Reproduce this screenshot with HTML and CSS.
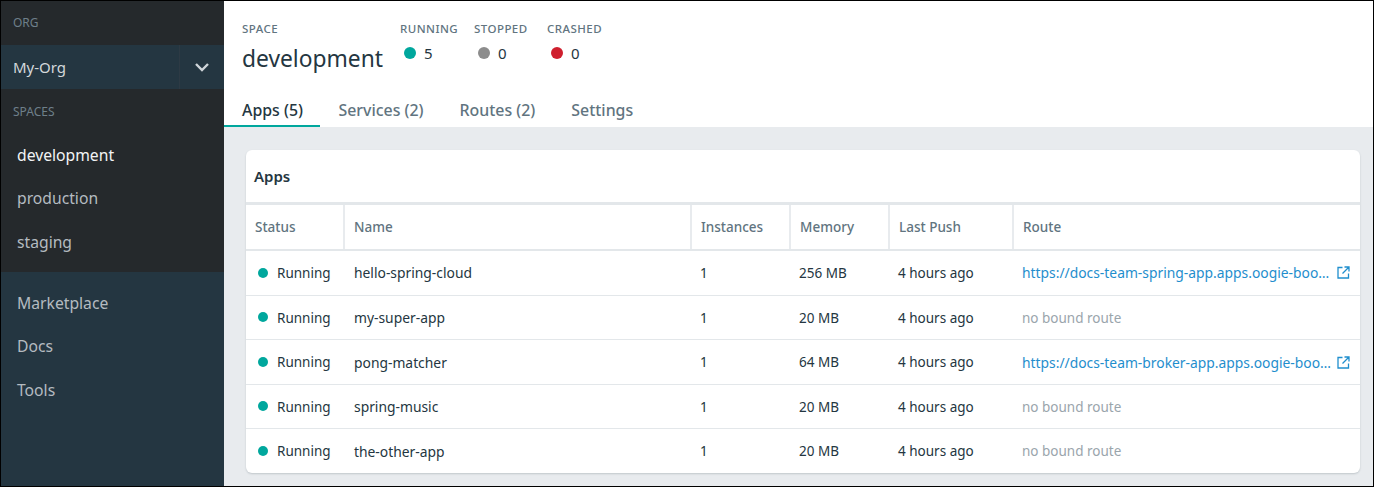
FILE: index.html
```html
<!DOCTYPE html>
<html lang="en">

<head>
    <meta charset="UTF-8">
    <title>development - Apps</title>
    <link rel="stylesheet" href="styles.css">
</head>

<body>
    <div class="app">
        <!-- Sidebar -->
        <nav class="sidebar">
            <div class="sideLabel orgLabel">ORG</div>
            <div class="orgPicker">
                <span class="orgName">My-Org</span>
                <span class="orgToggle">
                    <svg width="16" height="10" viewBox="0 0 16 10">
                        <path d="M2 2l6 6 6-6" fill="none" stroke="#cfd5d9" stroke-width="2.4" />
                    </svg>
                </span>
            </div>
            <div class="spaces">
                <div class="sideLabel">SPACES</div>
                <a class="sideLink active">development</a>
                <a class="sideLink">production</a>
                <a class="sideLink">staging</a>
            </div>
            <div class="sideLinks">
                <a class="sideLink">Marketplace</a>
                <a class="sideLink">Docs</a>
                <a class="sideLink">Tools</a>
            </div>
        </nav>

        <main class="main">
            <!-- Header -->
            <header class="header">
                <div class="summary">
                    <div class="spaceBlock">
                        <div class="miniLabel">SPACE</div>
                        <h1>development</h1>
                    </div>
                    <div class="count running">
                        <div class="miniLabel">RUNNING</div>
                        <div class="countValue"><span class="dot teal"></span>5</div>
                    </div>
                    <div class="count stopped">
                        <div class="miniLabel">STOPPED</div>
                        <div class="countValue"><span class="dot gray"></span>0</div>
                    </div>
                    <div class="count crashed">
                        <div class="miniLabel">CRASHED</div>
                        <div class="countValue"><span class="dot red"></span>0</div>
                    </div>
                </div>
                <div class="tabs">
                    <a class="tab active">Apps (5)</a>
                    <a class="tab">Services (2)</a>
                    <a class="tab">Routes (2)</a>
                    <a class="tab">Settings</a>
                </div>
            </header>

            <!-- Apps table -->
            <section class="content">
                <div class="card">
                    <h2>Apps</h2>
                    <table>
                        <thead>
                            <tr>
                                <th class="colStatus">Status</th>
                                <th class="colName">Name</th>
                                <th class="colInstances">Instances</th>
                                <th class="colMemory">Memory</th>
                                <th class="colPush">Last Push</th>
                                <th>Route</th>
                            </tr>
                        </thead>
                        <tbody>
                            <tr class="rowTall">
                                <td><span class="dot small teal"></span>Running</td>
                                <td class="appName">hello-spring-cloud</td>
                                <td>1</td>
                                <td>256 MB</td>
                                <td>4 hours ago</td>
                                <td class="routeCell">
                                    <a class="route">
                                        <span class="routeText">https://docs-team-spring-app.apps.oogie-boo…</span>
                                        <svg class="extIcon" width="13" height="13" viewBox="0 0 13 13">
                                            <path d="M5.5 1.5H1v10.500h10.500V7.500M7.500 1H12v4.500M12 1L5.500 7.500" fill="none" stroke="#1f8ecd" stroke-width="1.300" />
                                        </svg>
                                    </a>
                                </td>
                            </tr>
                            <tr class="rowB">
                                <td><span class="dot small teal"></span>Running</td>
                                <td class="appName">my-super-app</td>
                                <td>1</td>
                                <td>20 MB</td>
                                <td>4 hours ago</td>
                                <td class="noRoute">no bound route</td>
                            </tr>
                            <tr class="rowA">
                                <td><span class="dot small teal"></span>Running</td>
                                <td class="appName">pong-matcher</td>
                                <td>1</td>
                                <td>64 MB</td>
                                <td>4 hours ago</td>
                                <td class="routeCell">
                                    <a class="route">
                                        <span class="routeText">https://docs-team-broker-app.apps.oogie-boo…</span>
                                        <svg class="extIcon" width="13" height="13" viewBox="0 0 13 13">
                                            <path d="M5.5 1.5H1v10.500h10.500V7.500M7.500 1H12v4.500M12 1L5.500 7.500" fill="none" stroke="#1f8ecd" stroke-width="1.300" />
                                        </svg>
                                    </a>
                                </td>
                            </tr>
                            <tr class="rowB">
                                <td><span class="dot small teal"></span>Running</td>
                                <td class="appName">spring-music</td>
                                <td>1</td>
                                <td>20 MB</td>
                                <td>4 hours ago</td>
                                <td class="noRoute">no bound route</td>
                            </tr>
                            <tr class="rowA">
                                <td><span class="dot small teal"></span>Running</td>
                                <td class="appName">the-other-app</td>
                                <td>1</td>
                                <td>20 MB</td>
                                <td>4 hours ago</td>
                                <td class="noRoute">no bound route</td>
                            </tr>
                        </tbody>
                    </table>
                </div>
            </section>
        </main>
    </div>
</body>

</html>
```

FILE: styles.css
```css
* {
    box-sizing: border-box;
}

html,
body {
    margin: 0;
    height: 487px;
    overflow: hidden;
}

body {
    font-family: "Noto Sans", Lato, sans-serif;
    font-size: 13.5px;
    color: #243641;
    background: #000;
    padding: 1px;
}

.app {
    display: flex;
    height: 485px;
    background: #e8ebee;
}

/* sidebar */
.sidebar {
    width: 223px;
    flex: none;
    display: flex;
    flex-direction: column;
    background: #243641;
}

.sideLabel {
    height: 44px;
    padding: 13px 12px 0;
    font-size: 12px;
    line-height: 17px;
    color: #6e7f8a;
    background: #25292c;
}

.orgPicker {
    display: flex;
    height: 44px;
    align-items: center;
    color: #d3d8db;
    font-size: 15px;
}

.orgName {
    flex: 1;
    padding-left: 12px;
}

.orgToggle {
    width: 45px;
    height: 44px;
    display: flex;
    align-items: center;
    justify-content: center;
    border-left: 1px solid #2d3a44;
}

.spaces {
    height: 183px;
    background: #25292c;
}

.spaces .sideLabel {
    height: 44px;
    padding-top: 14px;
}

.sideLink {
    display: block;
    height: 43.4px;
    padding-left: 16px;
    line-height: 44px;
    font-size: 15.7px;
    color: #b4bbc0;
}

.sideLink.active {
    color: #f2f4f5;
}

.sideLinks {
    padding-top: 9px;
}

/* header */
.main {
    flex: 1;
    min-width: 0;
    display: flex;
    flex-direction: column;
}

.header {
    height: 126px;
    background: #fff;
    padding: 20px 0 0 18px;
}

.summary {
    display: flex;
    height: 72px;
}

.miniLabel {
    font-size: 11.5px;
    line-height: 16px;
    font-weight: 500;
    letter-spacing: 0.45px;
    color: #617480;
}

.spaceBlock {
    width: 158px;
}

h1 {
    margin: 6px 0 0;
    font-size: 22.8px;
    line-height: 32px;
    font-weight: 400;
    color: #243641;
}

.count {
    width: 74px;
}

.stopped {
    width: 73px;
}

.countValue {
    display: flex;
    align-items: center;
    margin-top: 6px;
    font-size: 15px;
    line-height: 20px;
}

.dot {
    display: inline-block;
    width: 12px;
    height: 12px;
    border-radius: 50%;
    margin: 0 8px 0 4px;
    flex: none;
}

.dot.small {
    width: 10px;
    height: 10px;
    margin: 0 9px 3px 3px;
    vertical-align: middle;
}

.teal {
    background: #00a79d;
}

.gray {
    background: #8c8c8c;
}

.red {
    background: #cf1f2e;
}

.tabs {
    display: flex;
    margin-left: -18px;
    height: 34px;
}

.tab {
    height: 34px;
    padding: 0 18px;
    line-height: 35px;
    font-size: 15.9px;
    font-weight: 500;
    color: #617480;
}

.tab.active {
    color: #243641;
    padding-right: 17.5px;
    border-bottom: 2px solid #00a79d;
}

/* apps card */
.content {
    flex: 1;
    padding: 23px 13px 0 22px;
}

.card {
    height: 323px;
    background: #fff;
    border-radius: 6px;
    box-shadow: 0 1px 2px rgba(36, 54, 65, 0.2);
    overflow: hidden;
}

h2 {
    margin: 0;
    height: 52px;
    padding-left: 8px;
    line-height: 52px;
    font-size: 15px;
    font-weight: 600;
    color: #243641;
}

table {
    width: 100%;
    border-collapse: collapse;
    table-layout: fixed;
    border-top: 3px solid #e3e7ea;
}

th {
    height: 46px;
    padding: 0 9px;
    text-align: left;
    font-size: 13.5px;
    font-weight: 500;
    color: #617480;
    border-left: 2px solid #e8ebee;
    border-bottom: 2px solid #e3e7ea;
}

th:first-child {
    border-left: none;
}

td {
    padding: 0 9px;
    font-size: 13.5px;
    white-space: nowrap;
    border-bottom: 1px solid #e3e7ea;
}

tr:last-child td {
    border-bottom: none;
}

.rowTall td {
    height: 46px;
}

.rowA td {
    height: 45px;
}

.rowB td {
    height: 44px;
}

td.appName {
    padding-left: 10px;
    font-size: 13.85px;
}

.colStatus {
    width: 98px;
}

.colName {
    width: 347px;
}

.colInstances {
    width: 99px;
}

.colMemory {
    width: 99px;
}

.colPush {
    width: 124px;
}

.noRoute {
    color: #9aa5ac;
}

td.routeCell {
    padding-right: 10px;
}

.route {
    display: flex;
    align-items: center;
    justify-content: space-between;
    color: #1f8ecd;
}

.routeText {
    font-size: 13.85px;
}

.extIcon {
    flex: none;
}
```
